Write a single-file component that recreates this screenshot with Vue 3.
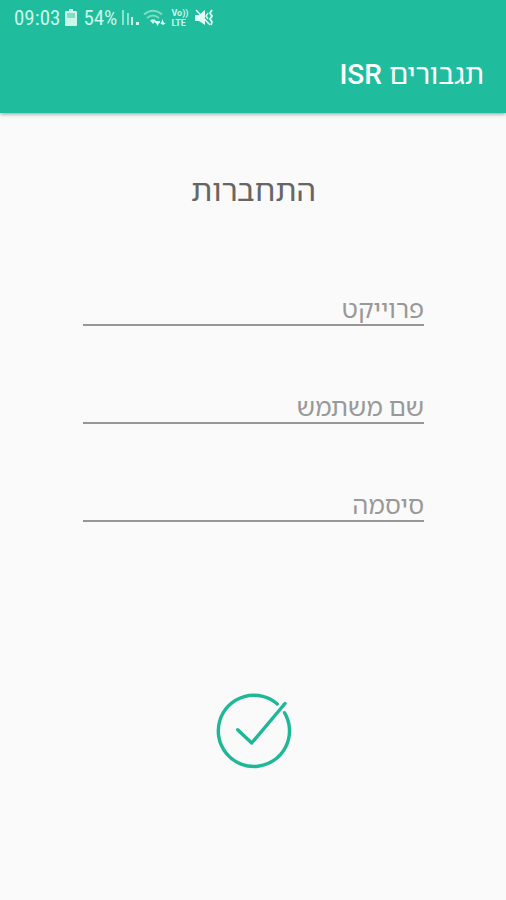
<script setup>
import { reactive } from 'vue'

const fields = [
  { id: 'project', label: 'פרוייקט', type: 'text' },
  { id: 'username', label: 'שם משתמש', type: 'text' },
  { id: 'password', label: 'סיסמה', type: 'password' },
]
const form = reactive({ project: '', username: '', password: '' })
</script>

<template>
  <div class="screen" dir="rtl">
    <header class="top">
      <div class="status" dir="ltr">
        <span class="time">09:03</span>
        <svg class="battery" width="12" height="18" viewBox="0 0 12 18">
          <path d="M4 0h4v2h3a1 1 0 0 1 1 1v13a1 1 0 0 1-1 1H1a1 1 0 0 1-1-1V3a1 1 0 0 1 1-1h3z" fill="#c9f8e9" />
          <path d="M2 4h8v5H2z" fill="#86dcc3" />
        </svg>
        <span class="level">54%</span>
        <svg class="signal" width="18" height="18" viewBox="0 0 18 18" fill="#8fe2cb">
          <path d="M0 1h2v15H0zM5 4h2v12H5z" />
          <path d="M9 8h2v8H9zM14 13h3v3h-3z" fill="#c9f8e9" />
        </svg>
        <svg class="wifi" width="23" height="18" viewBox="0 0 23 18" fill="none" stroke="#7fdcc3" stroke-width="2">
          <path d="M1 5.500Q10-2 19 5.500M4 9q6-5 12 0" />
          <path d="M7 11.500q3-2.500 6 0L10 15z" fill="#c9f8e9" stroke="none" />
          <path d="M12 12h5v2h-1l-1.500 3L13 14h-1zM17 14h1l1.500-4L21 14h2l-3 2z" fill="#dffff4" stroke="none" />
        </svg>
        <span class="volte"><b>Vo))</b><b>LTE</b></span>
        <svg class="mute" width="19" height="18" viewBox="0 0 19 18" fill="none" stroke="#dffff4" stroke-width="2">
          <path d="M0 6h4l6-5v15l-6-4H0z" fill="#dffff4" stroke="none" />
          <path d="M1 1l14 15" stroke-width="1.600" />
          <path d="M17 1l-2 3 2 3-2 3 2 3-1 3" stroke-width="1.800" />
          <path d="M13 4l-2 3 2 3" stroke-width="1.400" />
        </svg>
      </div>
      <div class="title">תגבורים <span class="latin">ISR</span></div>
    </header>

    <main>
      <h1>התחברות</h1>
      <form @submit.prevent>
        <div v-for="field in fields" :key="field.id" class="field">
          <input
            :id="field.id"
            v-model="form[field.id]"
            :type="field.type"
            :placeholder="field.label"
            :aria-label="field.label"
            autocomplete="off"
          />
        </div>
        <button type="submit" aria-label="התחברות">
          <svg width="78" height="78" viewBox="0 0 78 78" fill="none" stroke="#1eb897" stroke-width="3.400" stroke-linecap="round" stroke-linejoin="round">
            <path d="M62.300 12A35.600 35.600 0 1 0 69.600 20.800" />
            <path d="M22.700 37.700L36.700 51L70 11.500" />
          </svg>
        </button>
      </form>
    </main>
  </div>
</template>

<style>
body {
  margin: 0;
  background: #fafafa;
}
</style>

<style scoped>
.screen {
  min-height: 100vh;
  background: #fafafa;
  font-family: Roboto, "Noto Sans Hebrew", "Open Sans", sans-serif;
}
.top {
  background: #1fbd9d;
  box-shadow: 0 1px 4px rgba(0, 0, 0, 0.4);
  color: #fff;
}
.status {
  display: flex;
  align-items: center;
  height: 36px;
  padding: 0 14px;
  color: #c9f8e9;
  font-family: "Roboto Condensed", "Liberation Sans Narrow", Roboto, sans-serif;
  font-size: 21px;
  line-height: 36px;
  white-space: nowrap;
}
.battery {
  margin: 0 6px 0 5px;
}
.signal {
  margin: 0 3px 0 5px;
}
.volte {
  display: flex;
  flex-direction: column;
  width: 18px;
  margin: 0 6px 0 5px;
  font-family: Roboto, sans-serif;
  font-size: 9px;
  line-height: 10px;
}
.title {
  padding: 19px 22px;
  font-size: 28px;
  font-weight: 400;
  line-height: 39px;
}
.latin {
  font-weight: 500;
}
main {
  padding: 0 82px 0 83px;
}
h1 {
  margin: 0;
  padding: 56px 0 76px;
  color: #666;
  font-size: 31px;
  font-weight: 400;
  line-height: 44px;
  text-align: center;
}
form {
  display: flex;
  flex-direction: column;
}
.field {
  display: flex;
  height: 98px;
}
input {
  box-sizing: border-box;
  width: 100%;
  height: 37px;
  padding: 5px 0 0;
  border: 0;
  border-bottom: 2px solid #979797;
  border-radius: 0;
  outline: 0;
  background: transparent;
  color: #444;
  font-family: inherit;
  font-size: 25px;
  line-height: 30px;
}
input::placeholder {
  color: #999;
  opacity: 1;
}
button {
  align-self: center;
  margin-top: 109px;
  padding: 0;
  border: 0;
  background: transparent;
  cursor: pointer;
}
button svg {
  display: block;
}
</style>
